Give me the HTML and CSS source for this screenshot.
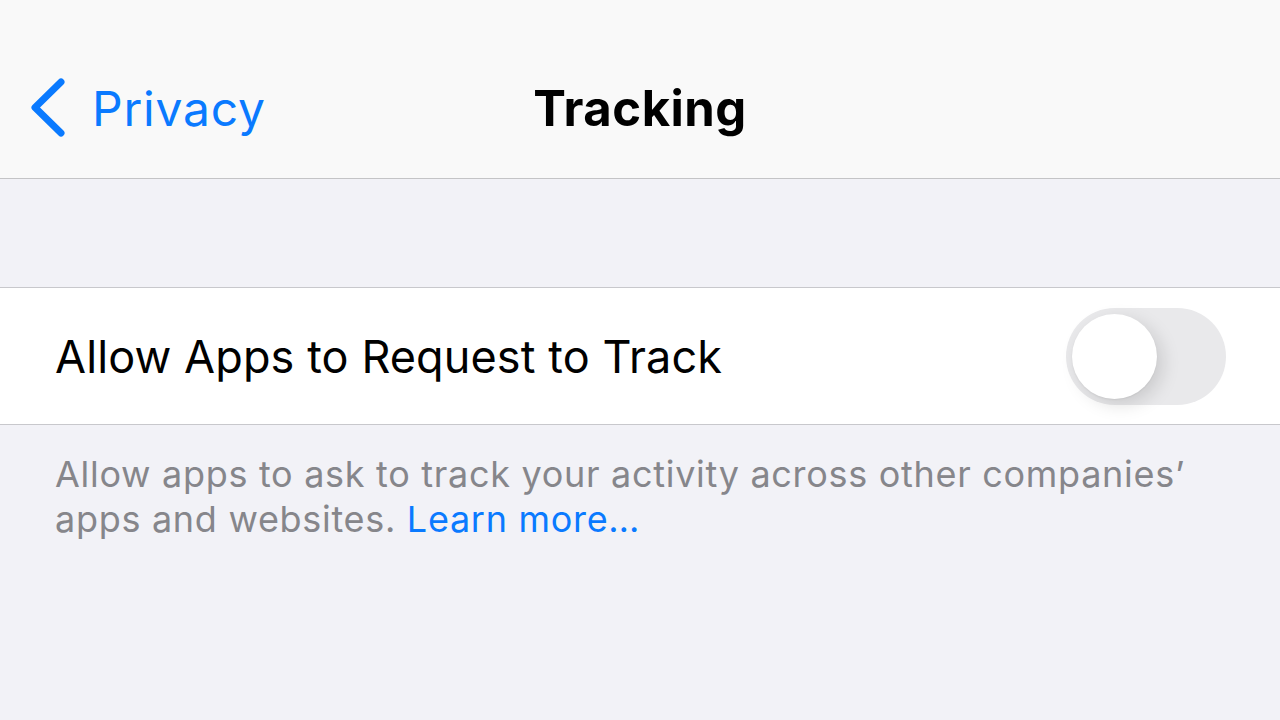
FILE: index.html
```html
<!DOCTYPE html>
<html lang="en">
<head>
  <meta charset="UTF-8" />
  <title>Tracking</title>
  <link rel="stylesheet" href="styles.css">
</head>
<body>

<!-- Навигация -->
<header class="nav-bar">
  <a href="#" class="back-link">
    <svg class="back-chevron" width="40" height="60" viewBox="0 0 40 60">
      <path d="M31 4 L5 29.5 L31 55" fill="none" stroke="#0a7aff" stroke-width="7" stroke-linecap="round" stroke-linejoin="round"/>
    </svg>
    <span>Privacy</span>
  </a>
  <h1 class="nav-title">Tracking</h1>
</header>

<div class="spacer"></div>

<!-- Настройка -->
<div class="settings-group">
  <div class="settings-row">
    <span class="row-label">Allow Apps to Request to Track</span>
    <div class="toggle">
      <div class="toggle-knob"></div>
    </div>
  </div>
</div>

<p class="footer-note">
  Allow apps to ask to track your activity across other companies’ apps and websites. <a href="#" class="learn-more">Learn more…</a>
</p>

</body>
</html>
```

FILE: styles.css
```css
* {
  box-sizing: border-box;
  margin: 0;
  padding: 0;
}

body {
  width: 1280px;
  height: 720px;
  overflow: hidden;
  font-family: Inter, 'Noto Sans', sans-serif;
  background-color: #f2f2f7;
  color: #000;
}

.nav-bar {
  height: 179px;
  background-color: #f9f9f9;
  border-bottom: 1px solid #c4c4c6;
  display: flex;
  align-items: center;
  justify-content: center;
  position: relative;
  padding-top: 38px;
}

.back-link {
  position: absolute;
  left: 30px;
  top: 78px;
  display: flex;
  align-items: center;
  gap: 22px;
  color: #0a7aff;
  text-decoration: none;
  font-size: 48px;
  letter-spacing: 0.8px;
}

.back-chevron {
  display: block;
}

.nav-title {
  font-size: 49px;
  font-weight: 700;
  letter-spacing: 0.5px;
}

.spacer {
  height: 108px;
}

.settings-group {
  background-color: #fff;
  border-top: 1px solid #c8c8cc;
  border-bottom: 1px solid #c8c8cc;
}

.settings-row {
  height: 136px;
  display: flex;
  align-items: center;
  justify-content: space-between;
  padding: 0 54px 0 55px;
}

.row-label {
  font-size: 45px;
  letter-spacing: 0.1px;
}

.toggle {
  width: 160px;
  height: 97px;
  border-radius: 49px;
  background-color: #e9e9eb;
  padding: 6px;
}

.toggle-knob {
  width: 85px;
  height: 85px;
  border-radius: 50%;
  background-color: #fff;
  box-shadow: 6px 6px 18px rgba(0, 0, 0, 0.13), 0 1px 2px rgba(0, 0, 0, 0.06);
}

.footer-note {
  padding: 27px 60px 0 55px;
  font-size: 36px;
  line-height: 45px;
  letter-spacing: 0.7px;
  color: #86868b;
}

.learn-more {
  color: #0a7aff;
  text-decoration: none;
}
```
